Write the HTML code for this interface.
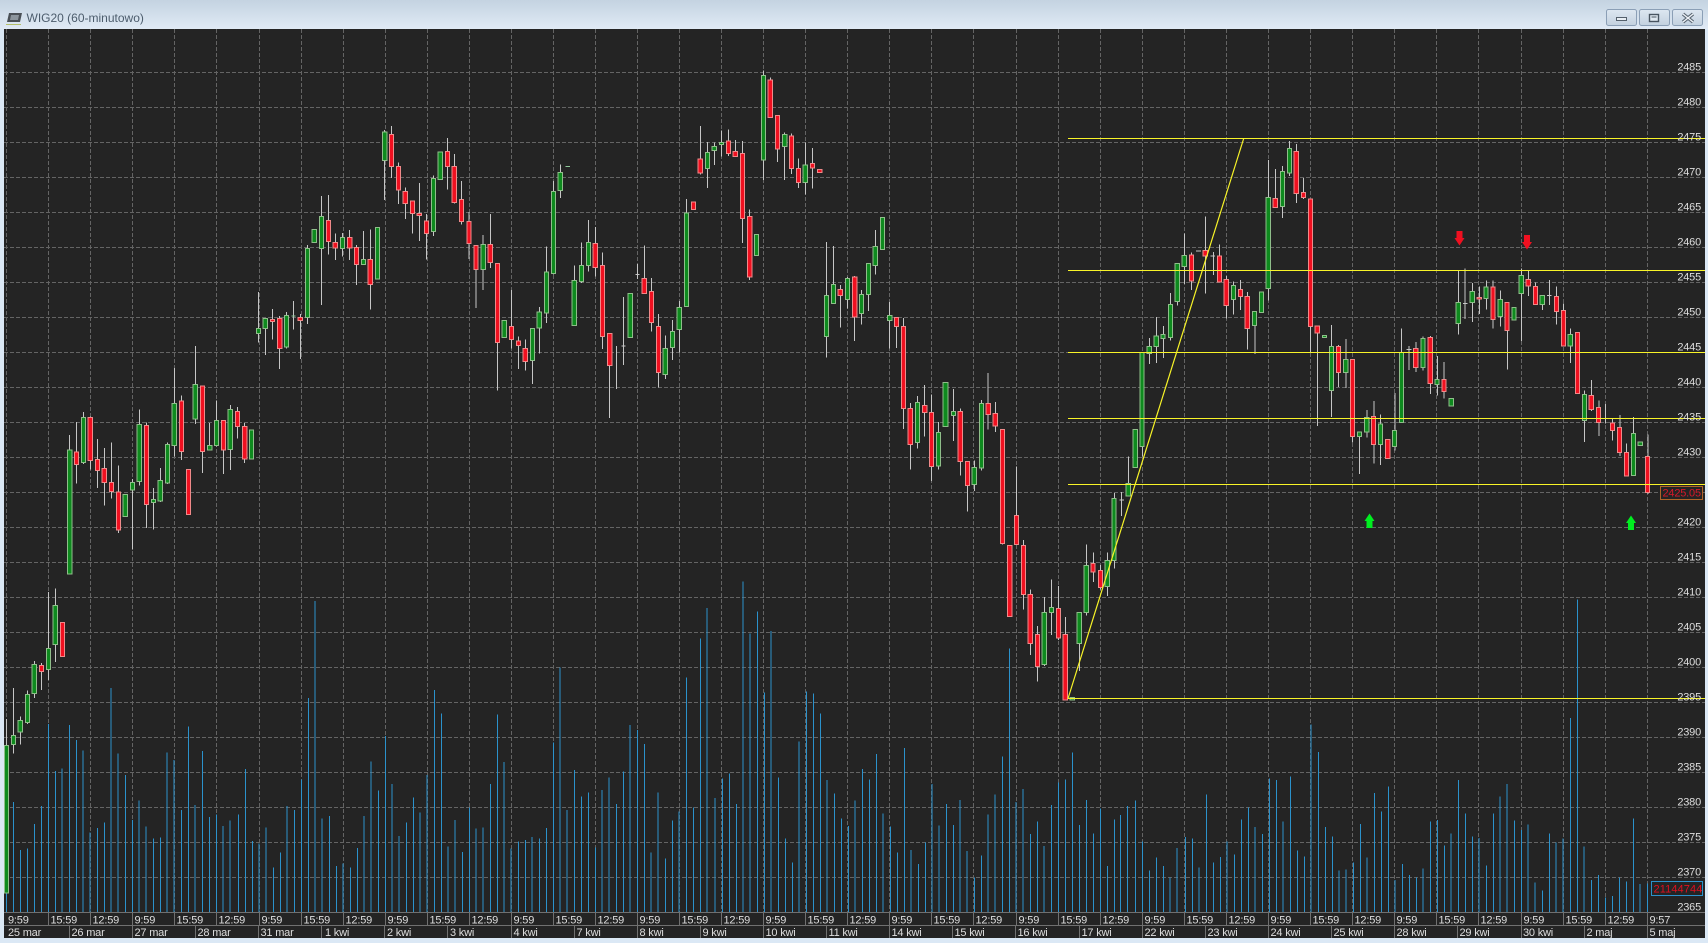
<!DOCTYPE html>
<html lang="pl">
<head>
<meta charset="utf-8">
<title>WIG20 (60-minutowo)</title>
<style>
html,body{margin:0;padding:0;width:1708px;height:943px;overflow:hidden;background:#dbe8f5}
svg{display:block;position:absolute;left:0;top:0}
text{font-family:"Liberation Sans",Arial,sans-serif;font-size:11px;fill:#dedede;letter-spacing:-.2px}
.c path{vector-effect:non-scaling-stroke;shape-rendering:crispEdges}
.w{fill:none;stroke:#c6c6c6;stroke-width:1}
.g{fill:#0e8a1e;stroke:#8fbe8a;stroke-width:1}
.r{fill:#f01020;stroke:#f08a8a;stroke-width:1}
.v{fill:none;stroke:#2b92cc;stroke-width:1}
.d{fill:none;stroke:#8fc89a;stroke-width:1}
</style>
</head>
<body>
<svg width="1708" height="943" viewBox="0 0 1708 943" xmlns="http://www.w3.org/2000/svg">
<defs>
<linearGradient id="tb" x1="0" y1="0" x2="0" y2="1"><stop offset="0" stop-color="#c4d3e1"/><stop offset="1" stop-color="#e0eaf5"/></linearGradient>
<linearGradient id="bt" x1="0" y1="0" x2="0" y2="1"><stop offset="0" stop-color="#dde7f1"/><stop offset="1" stop-color="#c3d1df"/></linearGradient>
</defs>
<rect width="1708" height="943" fill="#dbe8f5"/>
<rect width="1708" height="29" fill="url(#tb)"/>
<!-- title icon -->
<path d="M9 13H22L20 22H7Z" fill="#4a5056"/><path d="M11 15H19L18 20H10Z" fill="#8c959d"/><path d="M6 24.5H21" stroke="#b5c06a" stroke-width="1"/>
<text x="26.5" y="22" style="font-size:12px;fill:#4c5c6c;letter-spacing:0">WIG20 (60-minutowo)</text>
<!-- window buttons -->
<rect x="1606.5" y="9.5" width="30" height="16" rx="2" fill="url(#bt)" stroke="#8b9fb6"/>
<rect x="1639.5" y="9.5" width="30" height="16" rx="2" fill="url(#bt)" stroke="#8b9fb6"/>
<rect x="1672.5" y="9.5" width="30" height="16" rx="2" fill="url(#bt)" stroke="#8b9fb6"/>
<rect x="1616.5" y="17.5" width="10" height="3" fill="#e8eef4" stroke="#54606c"/>
<rect x="1649.5" y="14.5" width="9" height="7" fill="#dfe8f0" stroke="#485460" stroke-width="1.4"/><rect x="1651.5" y="16.5" width="5" height="1" fill="#485460"/>
<path d="M1683 14L1693 22M1693 14L1683 22" stroke="#5a6672" stroke-width="3.4"/><path d="M1683 14L1693 22M1693 14L1683 22" stroke="#eef3f8" stroke-width="1.4"/>
<!-- chart bg -->
<rect x="4" y="29" width="1701" height="909" fill="#242424"/>
<!-- grid -->
<g fill="none" stroke="#646464" stroke-width="1" stroke-dasharray="4 2" shape-rendering="crispEdges">
<path d="M6.5 29V912M48.5 29V912M90.5 29V912M132.5 29V912M174.5 29V912M216.5 29V912M259.5 29V912M301.5 29V912M343.5 29V912M385.5 29V912M427.5 29V912M469.5 29V912M511.5 29V912M553.5 29V912M595.5 29V912M637.5 29V912M679.5 29V912M721.5 29V912M763.5 29V912M805.5 29V912M847.5 29V912M889.5 29V912M931.5 29V912M973.5 29V912M1016.5 29V912M1058.5 29V912M1100.5 29V912M1142.5 29V912M1184.5 29V912M1226.5 29V912M1268.5 29V912M1310.5 29V912M1352.5 29V912M1394.5 29V912M1436.5 29V912M1478.5 29V912M1521.5 29V912M1563.5 29V912M1605.5 29V912M1647.5 29V912"/>
<path d="M4 72.5H1705M4 107.5H1705M4 142.5H1705M4 177.5H1705M4 212.5H1705M4 247.5H1705M4 282.5H1705M4 317.5H1705M4 352.5H1705M4 387.5H1705M4 422.5H1705M4 457.5H1705M4 492.5H1705M4 527.5H1705M4 562.5H1705M4 597.5H1705M4 632.5H1705M4 667.5H1705M4 702.5H1705M4 737.5H1705M4 772.5H1705M4 807.5H1705M4 842.5H1705M4 877.5H1705"/>
</g>
<!-- volume -->
<g class="c">
<g transform="translate(0,590) scale(.36352,.33333)"><path class="v" d="M18 880V968M37 636V968M56 780V968M75 775V968M95 702V968M114 648V968M133 402V968M152 543V968M171 535V968M191 405V968M210 450V968M229 482V968M248 727V968M268 714V968M287 698V968M306 294V968M325 491V968M345 555V968M364 690V968M383 632V968M402 710V968M422 745V968M441 743V968M460 487V968M479 510V968M499 660V968M518 409V968M537 645V968M557 483V968M576 681V968M595 674V968M614 708V968M633 692V968M656 674V968M675 537V968M694 753V968M713 760V968M732 713V968M752 833V968M771 788V968M790 648V968M810 660V968M829 568V968M848 324V968M867 33V968M886 686V968M906 678V968M925 828V968M944 820V968M964 833V968M983 774V968M1002 678V968M1021 514V968M1041 602V968M1060 438V968M1079 582V968M1098 738V968M1118 698V968M1137 623V968M1156 668V968M1175 555V968M1195 300V968M1214 370V968M1233 770V968M1252 690V968M1272 786V968M1291 653V968M1310 716V968M1329 713V968M1349 582V968M1368 373V968M1387 516V968M1406 776V968M1426 755V968M1445 750V968M1464 741V968M1484 745V968M1503 714V968M1522 458V968M1541 233V968"/></g>
<g transform="translate(560,570) scale(.36352,.33333)"><path class="v" d="M19 720V1028M40 600V1028M59 680V1028M78 668V1028M97 833V1028M116 660V1028M135 623V1028M155 702V1028M174 604V1028M193 465V1028M213 480V1028M232 522V1028M251 848V1028M270 668V1028M290 865V1028M309 752V1028M328 725V1028M348 322V1028M367 713V1028M386 206V1028M405 114V1028M427 684V1028M447 625V1028M466 610V1028M485 702V1028M504 35V1028M523 190V1028M543 125V1028M562 368V1028M581 183V1028M601 622V1028M620 805V1028M639 878V1028M658 515V1028M678 365V1028M697 370V1028M716 430V1028M735 630V1028M755 670V1028M774 745V1028M793 768V1028M812 692V1028M832 597V1028M851 628V1028M870 552V1028M889 730V1028M909 770V1028M928 848V1028M947 534V1028M966 840V1028M986 882V1028M1005 817V1028M1024 642V1028M1043 767V1028M1063 702V1028M1082 765V1028M1101 690V1028M1120 843V1028M1140 922V1028M1159 857V1028M1178 733V1028M1197 674V1028M1217 560V1028M1236 235V1028M1255 696V1028M1274 657V1028M1294 792V1028M1313 755V1028M1332 828V1028M1352 705V1028M1371 638V1028M1390 628V1028M1410 548V1028M1429 765V1028M1448 690V1028M1467 790V1028M1487 715V1028M1506 888V1028M1525 748V1028"/></g>
<g transform="translate(1120,590) scale(.36352,.33333)"><path class="v" d="M2 675V968M21 648V968M42 632V968M62 755V968M81 842V968M100 802V968M119 828V968M138 862V968M157 774V968M180 741V968M199 746V968M218 833V968M238 614V968M257 818V968M276 801V968M295 755V968M315 793V968M334 688V968M353 652V968M372 711V968M392 732V968M411 565V968M430 570V968M449 695V968M469 560V968M488 782V968M507 800V968M526 403V968M546 486V968M565 711V968M584 740V968M603 842V968M622 838V968M642 817V968M661 702V968M680 803V968M700 609V968M719 665V968M738 590V968M757 870V968M777 822V968M796 855V968M815 862V968M834 836V968M854 695V968M873 690V968M892 766V968M911 731V968M931 570V968M950 671V968M969 740V968M988 744V968M1008 827V968M1027 670V968M1046 620V968M1065 582V968M1085 692V968M1104 720V968M1123 704V968M1142 878V968M1162 902V968M1181 730V968M1200 758V968M1219 745V968M1239 384V968M1258 28V968M1277 770V968M1297 870V968M1316 855V968M1335 923V968M1355 918V968M1374 862V968M1393 875V968M1412 685V968M1431 882V968M1451 880V968"/></g>
<!-- candles part 1 -->
<g transform="translate(0,120) scale(.35714,.40816)">
<path class="w" d="M18 1467V1532M38 1392V1552M57 1462V1530M77 1398V1480M96 1326V1416M116 1330V1396M136 1157V1372M155 1148V1328M195 772V1114M214 740V890M234 715V843M253 726V856M273 782V902M292 804V944M312 790V927M332 846V1012M371 880V1052M390 709V896M410 741V1000M430 902V1003M449 852V936M469 790V892M488 607V825M508 675V833M547 554V745M567 650V865M587 742V809M606 687V800M626 736V867M645 698V858M665 703V780M685 742V840M724 421V545M743 486V576M763 463V538M783 480V610M802 470V560M822 443V513M841 475V586M861 306V500M900 186V453M920 184V330M939 278V343M959 277V335M979 269V343M998 306V404M1018 272V354M1037 268V464M1077 25V196M1096 15V142M1116 104V206M1135 165V242M1155 197V278M1174 154V296M1194 230V342M1214 136V284M1253 44V170M1272 83V204M1292 150V256M1313 225V341M1333 308V460M1353 282V416M1373 230V363M1393 351V663M1432 416V560M1452 530V610M1471 538V614M1491 511V647M1510 458V572M1530 310V497M1550 150V378"/>
<path class="g" d="M12 1532H24V1894H12zM32 1508H44V1530H32zM51 1471H63V1500H51zM71 1407H83V1476H71zM90 1334H102V1405H90zM130 1295H142V1346H130zM149 1189H161V1285H149zM189 808H201V1112H189zM228 729H240V839H228zM345 917H357V971H345zM365 888H377V906H365zM384 746H396V886H384zM424 930H436V937H424zM443 883H455V933H443zM463 795H475V889H463zM482 694H494V797H482zM541 648H553V732H541zM581 797H593V809H581zM600 736H612V798H600zM639 709H651V807H639zM698 760H710V830H698zM718 511H730V523H718zM737 486H749V511H737zM796 479H808V556H796zM855 315H867V484H855zM874 268H886V300H874zM894 236H906V315H894zM953 288H965V315H953zM1012 342H1024V354H1012zM1051 263H1063V389H1051zM1071 30H1083V99H1071zM1208 143H1220V273H1208zM1227 79H1239V146H1227zM1347 305H1359V366H1347zM1406 491H1418V533H1406zM1485 511H1497V589H1485zM1504 471H1516V509H1504zM1524 373H1536V473H1524zM1544 175H1556V376H1544z"/>
<path class="r" d="M110 1336H122V1351H110zM169 1231H181V1314H169zM208 814H220V844H208zM247 729H259V834H247zM267 832H279V859H267zM286 854H298V888H286zM306 888H318V910H306zM326 912H338V1005H326zM404 748H416V942H404zM502 689H514V812H502zM522 856H534V967H522zM561 652H573V812H561zM620 736H632V809H620zM659 714H671V751H659zM679 751H691V830H679zM757 489H769V494H757zM777 486H789V560H777zM835 484H847V491H835zM914 246H926V298H914zM933 300H945V313H933zM973 288H985V313H973zM992 312H1004V354H992zM1031 342H1043V403H1031zM1090 35H1102V114H1090zM1110 114H1122V172H1110zM1129 175H1141V205H1129zM1149 199H1161V229H1149zM1168 229H1180V234H1168zM1188 248H1200V278H1188zM1247 77H1259V114H1247zM1266 114H1278V202H1266zM1286 195H1298V249H1286zM1307 249H1319V302H1307zM1327 308H1339V366H1327zM1367 305H1379V349H1367zM1387 351H1399V545H1387zM1426 506H1438V538H1426zM1446 542H1458V553H1446zM1465 560H1477V592H1465z"/>
<path class="d" d="M816 480H828"/>
</g>
<!-- candles part 2 -->
<g transform="translate(540,60) scale(.35714,.42092)">
<path class="w" d="M57 248V328M96 488V524M116 433V530M136 380V503M155 397V514M175 457V687M195 650V851M214 680V782M234 563V725M273 485V520M292 441V556M312 518V645M332 604V778M351 654V758M371 618V713M390 572V695M410 330V586M449 157V272M469 195V304M488 196V250M508 168V229M528 165V228M547 190V229M567 193V435M587 355V523M626 25V285M645 42V137M665 132V242M685 172V285M704 175V271M724 234V304M743 196V320M763 209V305M802 432V707M822 442V578M841 535V636M861 515V590M880 513V668M900 547V628M920 483V596M939 404V510M979 575V685M998 610V684M1018 613V877M1037 815V973M1057 798V923M1077 772V895M1096 795V1000M1116 860V973M1158 782V905M1177 828V987M1197 954V1073M1216 952V1024M1236 808V975M1255 744V878M1275 813V884M1295 878V1151M1334 966V1151M1354 1140V1305M1373 1258V1413M1393 1345V1477M1412 1276V1440M1432 1234V1366M1452 1250V1378M1471 1323V1521"/>
<path class="w" d="M228 679H240M267 510H279"/>
<path class="g" d="M51 267H63V310H51zM90 524H102V631H90zM110 488H122V526H110zM130 433H142V488H130zM247 555H259V659H247zM345 685H357V747H345zM365 645H377V683H365zM384 588H396V640H384zM404 364H416V586H404zM463 220H475V258H463zM482 205H494V215H482zM502 196H514V201H502zM600 414H612V465H600zM620 37H632V237H620zM679 177H691V206H679zM737 250H749V291H737zM796 559H808V657H796zM816 533H828V578H816zM855 519H867V569H855zM894 557H906V602H894zM914 483H926V557H914zM933 443H945V488H933zM953 374H965V450H953zM973 607H985V619H973zM1051 814H1063V909H1051zM1110 885H1122V964H1110zM1129 766H1143V871H1129zM1152 835H1164V845H1152zM1210 968H1222V1008H1210zM1230 816H1242V969H1230zM1406 1313H1418V1436H1406zM1426 1301H1438V1313H1426z"/>
<path class="r" d="M424 337H436V355H424zM443 235H455V268H443zM522 193H534V222H522zM541 217H553V229H541zM561 222H573V377H561zM581 372H593V516H581zM639 48H651V137H639zM659 132H671V212H659zM698 180H710V258H698zM718 258H730V291H718zM757 246H769V256H757zM777 260H789V267H777zM169 488H181V657H169zM149 436H161V493H149zM189 650H201V726H189zM286 519H298V555H286zM306 550H318V624H306zM326 633H338V742H326zM835 545H847V560H835zM875 516H887V611H875zM992 612H1004V633H992zM1012 633H1024V828H1012zM1031 828H1043V914H1031zM1071 821H1083V837H1071zM1090 837H1102V966H1090zM1171 835H1183V954H1171zM1191 954H1203V1011H1191zM1249 816H1261V842H1249zM1269 840H1281V870H1269zM1289 878H1301V1149H1289zM1309 1153H1321V1322H1309zM1328 1082H1340V1151H1328zM1348 1153H1360V1270H1348zM1367 1270H1379V1386H1367zM1387 1365H1399V1441H1387zM1446 1303H1458V1373H1446zM1465 1365H1477V1521H1465z"/>
<path class="d" d="M71 253H84"/>
</g>
<!-- candles part 3 -->
<g transform="translate(1060,120) scale(.38265,.38265)">
<path class="w" d="M51 1368V1440M69 1110V1295M87 1130V1208M106 1163V1227M124 1130V1244M142 975V1172M161 972V1035M179 880V982M215 853V880M234 570V638M252 515V635M270 538V622M289 452V576M307 474V485M325 296V428M344 346V444M380 252V453M401 345V405M417 326V425M435 408V519M454 422V508M472 418V496M490 450V600M509 537V612M545 105V472M563 128V229M582 120V256M600 55V146M618 63V217M637 152V207M655 540V607M673 539V800M710 536V776M728 588V698M747 572V700M765 827V843M783 816V925M802 758V830M820 735V898M838 770V902M875 713V864M893 545V790M912 590V653M930 580V658M949 566V655M968 564V716M986 617V720M1004 632V728M1041 393V561M1059 388V520M1078 426V528M1096 435V507M1114 420V495M1132 420V545M1151 445V540M1169 550V652M1206 388V578M1224 395V460M1243 425V482M1261 482V497M1279 418V483M1298 435V535M1316 480V592M1334 545V635M1371 707V841M1389 680V760M1408 733V826M1426 742V793M1444 782V838M1463 771V878M1481 845V931M1499 776V819M1536 822V978"/>
<path class="w" d="M155 993H167M356 343H368M393 356H405M906 600H918M1053 480H1065M1273 458H1285"/>
<path class="g" d="M26 1509H38V1516H26zM45 1287H56V1368H45zM63 1164H74V1287H63zM118 1151H129V1219H118zM136 989H147V1151H136zM173 950H184V982H173zM191 809H202V908H191zM209 608H220V853H209zM228 592H239V610H228zM246 565H257V592H246zM264 560H275V571H264zM283 482H294V569H283zM301 375H312V474H301zM319 354H330V383H319zM448 432H459V469H448zM503 500H514V537H503zM521 450H532V503H521zM539 202H550V440H539zM576 134H587V226H576zM594 74H605V138H594zM686 563H697V569H686zM704 592H715V707H704zM741 626H752V660H741zM777 816H788V827H777zM796 778H807V816H796zM832 795H843V848H832zM869 811H880V853H869zM887 608H898V790H887zM943 571H954V647H943zM980 678H991V691H980zM1017 728H1028V748H1017zM1035 477H1046V532H1035zM1072 448H1083V477H1072zM1108 437H1119V466H1108zM1145 469H1156V513H1145zM1181 490H1192V523H1181zM1200 406H1211V454H1200zM1255 458H1266V482H1255zM1328 560H1339V591H1328zM1365 717H1376V785H1365zM1493 819H1504V929H1493zM1511 842H1522V851H1511z"/>
<path class="r" d="M81 1159H92V1181H81zM100 1177H111V1222H100zM338 353H349V421H338zM374 341H385V356H374zM411 356H422V423H411zM429 417H440V485H429zM466 443H477V461H466zM484 461H495V545H484zM557 205H568V229H557zM612 82H623V192H612zM631 189H642V203H631zM649 207H660V540H649zM667 539H678V556H667zM722 592H733V660H722zM759 626H770V827H759zM814 775H825V848H814zM851 835H862V885H851zM924 597H935V647H924zM962 568H973V689H962zM998 678H1009V709H998zM1090 464H1101V468H1090zM1126 437H1137V521H1126zM1163 477H1174V550H1163zM1218 417H1229V434H1218zM1237 435H1248V482H1237zM1292 461H1303V500H1292zM1310 498H1321V590H1310zM1347 555H1358V715H1347zM1383 720H1394V757H1383zM1402 751H1413V790H1402zM1438 792H1449V811H1438zM1457 803H1468V869H1457zM1475 869H1486V931H1475zM1530 879H1541V973H1530z"/>
</g>
</g>
<!-- yellow lines -->
<g stroke="#f8f428" stroke-width="1" fill="none">
<path shape-rendering="crispEdges" d="M1068 138.5H1705M1068 270.5H1705M1068 352.5H1705M1068 418.5H1705M1068 484.5H1705M1068 698.5H1705"/>
<path stroke-width="1.2" d="M1068 698.5L1243.7 138.5"/>
</g>
<!-- arrows -->
<polygon points="1459.5,245.5 1454.5,238 1456.5,238 1456.5,231 1462.5,231 1462.5,238 1464.5,238" fill="#f01020"/>
<polygon points="1527,249.5 1522,242 1524,242 1524,235 1530,235 1530,242 1532,242" fill="#f01020"/>
<polygon points="1369.5,513.5 1364.5,521 1366.5,521 1366.5,528 1372.5,528 1372.5,521 1374.5,521" fill="#00ee20"/>
<polygon points="1631,515.5 1626,523 1628,523 1628,530 1634,530 1634,523 1636,523" fill="#00ee20"/>
<!-- price labels -->
<g text-anchor="end">
<text x="1701" y="70.5">2485</text><text x="1701" y="105.5">2480</text><text x="1701" y="140.5">2475</text><text x="1701" y="175.5">2470</text><text x="1701" y="210.5">2465</text><text x="1701" y="245.5">2460</text><text x="1701" y="280.5">2455</text><text x="1701" y="315.5">2450</text><text x="1701" y="350.5">2445</text><text x="1701" y="385.5">2440</text><text x="1701" y="420.5">2435</text><text x="1701" y="455.5">2430</text><text x="1701" y="525.5">2420</text><text x="1701" y="560.5">2415</text><text x="1701" y="595.5">2410</text><text x="1701" y="630.5">2405</text><text x="1701" y="665.5">2400</text><text x="1701" y="700.5">2395</text><text x="1701" y="735.5">2390</text><text x="1701" y="770.5">2385</text><text x="1701" y="805.5">2380</text><text x="1701" y="840.5">2375</text><text x="1701" y="875.5">2370</text><text x="1701" y="910.5">2365</text>
</g>
<rect x="1660.5" y="486.5" width="42" height="13" fill="#242424" stroke="#b0642a"/>
<text x="1662.5" y="496.5" style="fill:#d8182a">2425.05</text>
<rect x="1651.5" y="881.5" width="51" height="14" fill="#242424" stroke="#2b92cc"/>
<text x="1653.5" y="892.5" style="fill:#e01020;letter-spacing:.1px">21144744</text>
<!-- time axis -->
<path shape-rendering="crispEdges" fill="none" stroke="#707070" d="M4 912.5H1705M4 925.5H1705M48.5 913V925M90.5 913V925M132.5 913V925M174.5 913V925M216.5 913V925M259.5 913V925M301.5 913V925M343.5 913V925M385.5 913V925M427.5 913V925M469.5 913V925M511.5 913V925M553.5 913V925M595.5 913V925M637.5 913V925M679.5 913V925M721.5 913V925M763.5 913V925M805.5 913V925M847.5 913V925M889.5 913V925M931.5 913V925M973.5 913V925M1016.5 913V925M1058.5 913V925M1100.5 913V925M1142.5 913V925M1184.5 913V925M1226.5 913V925M1268.5 913V925M1310.5 913V925M1352.5 913V925M1394.5 913V925M1436.5 913V925M1478.5 913V925M1521.5 913V925M1563.5 913V925M1605.5 913V925M1647.5 913V925M69.5 926V938M132.5 926V938M195.5 926V938M258.5 926V938M321.5 926V938M384.5 926V938M447.5 926V938M511.5 926V938M574.5 926V938M637.5 926V938M700.5 926V938M763.5 926V938M826.5 926V938M889.5 926V938M952.5 926V938M1015.5 926V938M1079.5 926V938M1142.5 926V938M1205.5 926V938M1268.5 926V938M1331.5 926V938M1394.5 926V938M1457.5 926V938M1521.5 926V938M1584.5 926V938M1647.5 926V938"/>
<g>
<text x="8" y="923.5">9:59</text><text x="50.5" y="923.5">15:59</text><text x="92.5" y="923.5">12:59</text><text x="134.5" y="923.5">9:59</text><text x="176.5" y="923.5">15:59</text><text x="218.5" y="923.5">12:59</text><text x="261.5" y="923.5">9:59</text><text x="303.5" y="923.5">15:59</text><text x="345.5" y="923.5">12:59</text><text x="387.5" y="923.5">9:59</text><text x="429.5" y="923.5">15:59</text><text x="471.5" y="923.5">12:59</text><text x="513.5" y="923.5">9:59</text><text x="555.5" y="923.5">15:59</text><text x="597.5" y="923.5">12:59</text><text x="639.5" y="923.5">9:59</text><text x="681.5" y="923.5">15:59</text><text x="723.5" y="923.5">12:59</text><text x="765.5" y="923.5">9:59</text><text x="807.5" y="923.5">15:59</text><text x="849.5" y="923.5">12:59</text><text x="891.5" y="923.5">9:59</text><text x="933.5" y="923.5">15:59</text><text x="975.5" y="923.5">12:59</text><text x="1018.5" y="923.5">9:59</text><text x="1060.5" y="923.5">15:59</text><text x="1102.5" y="923.5">12:59</text><text x="1144.5" y="923.5">9:59</text><text x="1186.5" y="923.5">15:59</text><text x="1228.5" y="923.5">12:59</text><text x="1270.5" y="923.5">9:59</text><text x="1312.5" y="923.5">15:59</text><text x="1354.5" y="923.5">12:59</text><text x="1396.5" y="923.5">9:59</text><text x="1438.5" y="923.5">15:59</text><text x="1480.5" y="923.5">12:59</text><text x="1523.5" y="923.5">9:59</text><text x="1565.5" y="923.5">15:59</text><text x="1607.5" y="923.5">12:59</text><text x="1649.5" y="923.5">9:57</text>
<text x="8" y="936">25 mar</text><text x="71.5" y="936">26 mar</text><text x="134.5" y="936">27 mar</text><text x="197.5" y="936">28 mar</text><text x="260.5" y="936">31 mar</text><text x="325" y="936">1 kwi</text><text x="387" y="936">2 kwi</text><text x="450" y="936">3 kwi</text><text x="513.5" y="936">4 kwi</text><text x="576.5" y="936">7 kwi</text><text x="639.5" y="936">8 kwi</text><text x="702.5" y="936">9 kwi</text><text x="765.5" y="936">10 kwi</text><text x="828.5" y="936">11 kwi</text><text x="891.5" y="936">14 kwi</text><text x="954.5" y="936">15 kwi</text><text x="1017.5" y="936">16 kwi</text><text x="1081.5" y="936">17 kwi</text><text x="1144.5" y="936">22 kwi</text><text x="1207.5" y="936">23 kwi</text><text x="1270.5" y="936">24 kwi</text><text x="1333.5" y="936">25 kwi</text><text x="1396.5" y="936">28 kwi</text><text x="1459.5" y="936">29 kwi</text><text x="1523" y="936">30 kwi</text><text x="1586.5" y="936">2 maj</text><text x="1649.5" y="936">5 maj</text>
</g>
</svg>
</body>
</html>
